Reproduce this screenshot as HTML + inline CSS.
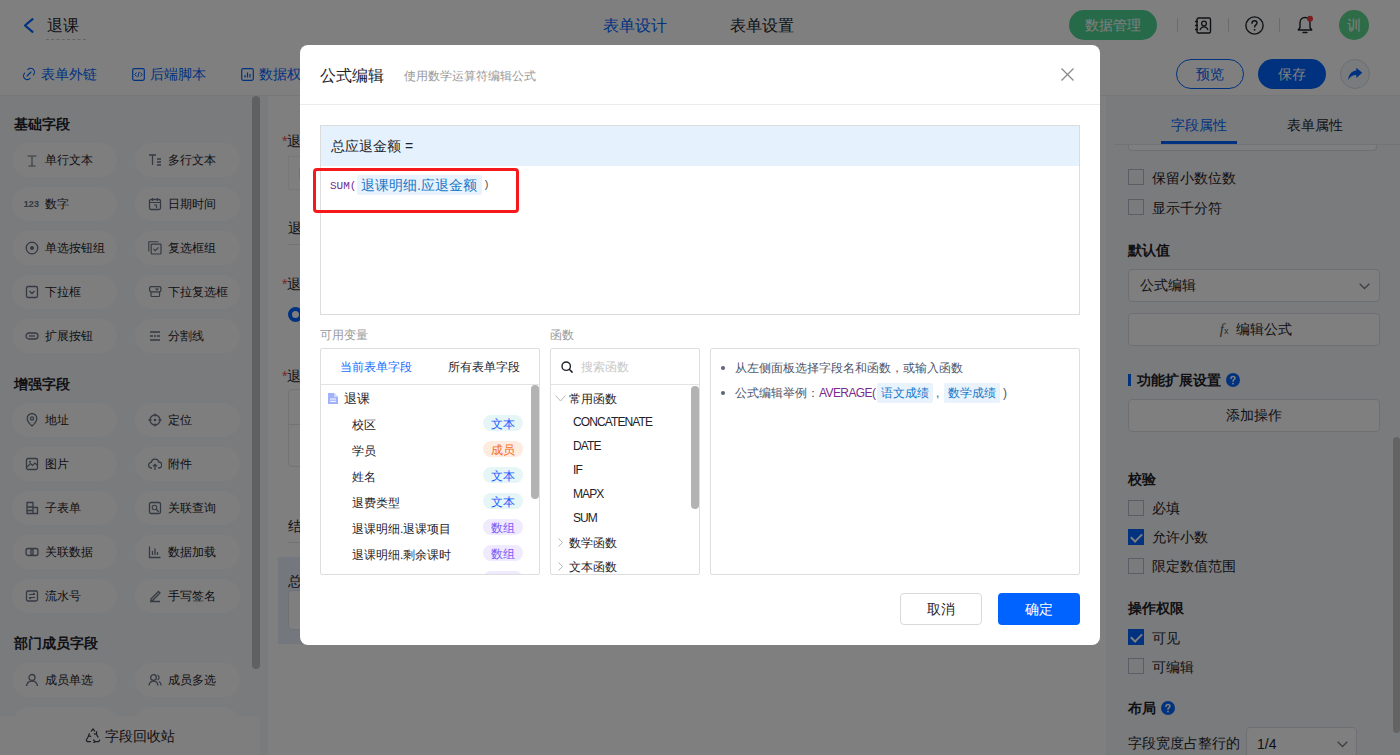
<!DOCTYPE html>
<html><head><meta charset="utf-8">
<style>
*{box-sizing:border-box;margin:0;padding:0}
html,body{width:1400px;height:755px;overflow:hidden;background:#fff}
body{font-family:"Liberation Sans",sans-serif;color:#1f2329;position:relative}
.a{position:absolute;white-space:nowrap}
/* header */
#hdr{position:absolute;left:0;top:0;width:1400px;height:51px;background:#fff;border-bottom:1px solid #e8e8e8}
#tb{position:absolute;left:0;top:50px;width:1400px;height:46px;background:#fff;border-bottom:1px solid #eceef2}
#lp{position:absolute;left:0;top:96px;width:260px;height:659px;background:#f4f6f9}
.sec{position:absolute;left:14px;font-size:14px;font-weight:bold;color:#1f2329;line-height:14px}
.chip{position:absolute;width:105px;height:34px;border-radius:17px;background:#fdfdfe;font-size:12px;line-height:34px;color:#1f2329}
.chip .ic{position:absolute;left:13px;top:10px;width:14px;height:14px}
.chip span{position:absolute;left:33px;top:0}
#canvas{position:absolute;left:260px;top:96px;width:846px;height:659px;background:#f4f6f9}
#form{position:absolute;left:268px;top:96px;width:838px;height:659px;background:#fff}
#rp{position:absolute;left:1106px;top:96px;width:294px;height:659px;background:#f5f7fa}
.cb{position:absolute;left:1128px;width:16px;height:16px;border:1px solid #b4bbcb;border-radius:0;background:transparent}
.cb.on{background:#0265ff;border-color:#0265ff}
.cb.on::after{content:"";position:absolute;left:4px;top:1px;width:5px;height:9px;border:solid #fff;border-width:0 2px 2px 0;transform:rotate(45deg)}
.rt{position:absolute;left:1152px;font-size:14px;line-height:16px;color:#1f2329}
.rh{position:absolute;left:1128px;font-size:14px;font-weight:bold;line-height:14px;color:#1f2329}
.rbox{position:absolute;left:1128px;width:252px;height:33px;border:1px solid #dcdfe6;border-radius:4px;background:#fff;font-size:14px;line-height:31px}
#mask{position:absolute;left:0;top:0;width:1400px;height:755px;background:rgba(0,0,0,.5)}
/* modal */
#modal{position:absolute;left:300px;top:45px;width:800px;height:600px;background:#fff;border-radius:8px}
.m{position:absolute;white-space:nowrap}
.pnl{position:absolute;top:348px;height:227px;border:1px solid #dedede;border-radius:2px;background:#fff;overflow:hidden}
.vi{position:absolute;left:32px;font-size:12px;line-height:14px;color:#1f2329;margin-top:1px}
.tag{position:absolute;left:163px;width:40px;height:16px;border-radius:8px;font-size:12px;line-height:18px;text-align:center}
.t1{background:#e6f6f6;color:#1f5cff}
.t2{background:#ffece1;color:#f26b22}
.t3{background:#efeafd;color:#7a5af8}
.fn{position:absolute;left:22px;font-size:12px;line-height:14px;color:#1f2329}
.fl{font-size:12px;letter-spacing:-0.9px}
</style></head><body>

<!-- HEADER -->
<div id="hdr"></div>
<svg class="a" style="left:23px;top:18px" width="11" height="15" viewBox="0 0 11 15"><path d="M9.5 1.2 L2 7.5 L9.5 13.8" fill="none" stroke="#0265ff" stroke-width="2.2" stroke-linecap="round" stroke-linejoin="round"/></svg>
<div class="a" style="left:47px;top:15px;font-size:16px;line-height:22px;color:#1f2329">退课</div>
<div class="a" style="left:46px;top:39px;width:40px;border-top:1px dashed #c8c8c8"></div>
<div class="a" style="left:603px;top:15px;font-size:16px;line-height:22px;color:#0265ff">表单设计</div>
<div class="a" style="left:730px;top:15px;font-size:16px;line-height:22px;color:#1f2329">表单设置</div>
<div class="a" style="left:1069px;top:10px;width:88px;height:30px;border-radius:15px;background:#4ed494;color:#fff;font-size:14px;line-height:30px;text-align:center">数据管理</div>
<div class="a" style="left:1177px;top:18px;width:1px;height:14px;background:#d8d8d8"></div>
<div class="a" style="left:1228px;top:18px;width:1px;height:14px;background:#d8d8d8"></div>
<div class="a" style="left:1279px;top:18px;width:1px;height:14px;background:#d8d8d8"></div>
<svg class="a" style="left:1194px;top:17px" width="18" height="17" viewBox="0 0 18 17"><rect x="3" y="1" width="13.5" height="15" rx="1.5" fill="none" stroke="#1f2329" stroke-width="1.4"/><circle cx="10" cy="6.5" r="2.4" fill="none" stroke="#1f2329" stroke-width="1.3"/><path d="M6 13.2c.6-2.3 2-3.3 4-3.3s3.4 1 4 3.3" fill="none" stroke="#1f2329" stroke-width="1.3"/><path d="M1 4.5h3M1 8.5h3M1 12.5h3" stroke="#1f2329" stroke-width="1.3"/></svg>
<svg class="a" style="left:1245px;top:16px" width="19" height="19" viewBox="0 0 19 19"><circle cx="9.5" cy="9.5" r="8.6" fill="none" stroke="#1f2329" stroke-width="1.4"/><path d="M7 7.3c0-1.5 1.1-2.5 2.5-2.5s2.5 1 2.5 2.3c0 1.7-2.4 1.9-2.4 3.8" fill="none" stroke="#1f2329" stroke-width="1.4" stroke-linecap="round"/><circle cx="9.6" cy="13.8" r=".9" fill="#1f2329"/></svg>
<svg class="a" style="left:1296px;top:15px" width="18" height="20" viewBox="0 0 18 20"><path d="M9 2.5c-3 0-5 2.3-5 5.3v4.7L2.3 15h13.4L14 12.5V7.8c0-3-2-5.3-5-5.3z" fill="none" stroke="#1f2329" stroke-width="1.4" stroke-linejoin="round"/><path d="M7 17.5h4" stroke="#1f2329" stroke-width="1.4" stroke-linecap="round"/><circle cx="14" cy="3.8" r="3" fill="#f23c3c"/></svg>
<div class="a" style="left:1339px;top:10px;width:30px;height:30px;border-radius:15px;background:#5cd890;color:#fff;font-size:14px;line-height:30px;text-align:center">训</div>

<!-- TOOLBAR -->
<div id="tb"></div>
<svg class="a" style="left:22px;top:67px" width="14" height="14" viewBox="0 0 14 14"><path d="M5.9 2.6A3.7 3.7 0 0 1 11.4 7.8M8.1 11.4A3.7 3.7 0 0 1 2.6 6.2M5 9l4-4" fill="none" stroke="#0265ff" stroke-width="1.15" stroke-linecap="round"/></svg>
<div class="a" style="left:41px;top:64px;font-size:14px;line-height:20px;color:#0265ff">表单外链</div>
<svg class="a" style="left:132px;top:68px" width="13" height="13" viewBox="0 0 13 13"><rect x=".7" y=".7" width="11.6" height="11.6" rx="1.5" fill="none" stroke="#0265ff" stroke-width="1.2"/><path d="M4.5 4.5 2.8 6.5l1.7 2M8.5 4.5l1.7 2-1.7 2M7.2 3.8 5.8 9.2" fill="none" stroke="#0265ff" stroke-width="1"/></svg>
<div class="a" style="left:150px;top:64px;font-size:14px;line-height:20px;color:#0265ff">后端脚本</div>
<svg class="a" style="left:241px;top:68px" width="13" height="13" viewBox="0 0 13 13"><rect x=".7" y=".7" width="11.6" height="11.6" rx="1.5" fill="none" stroke="#0265ff" stroke-width="1.2"/><path d="M4 9.5V7M6.5 9.5V4.5M9 9.5V6" stroke="#0265ff" stroke-width="1.2"/></svg>
<div class="a" style="left:259px;top:64px;font-size:14px;line-height:20px;color:#0265ff">数据权限</div>
<div class="a" style="left:1176px;top:59px;width:68px;height:30px;border:1px solid #0265ff;border-radius:15px;color:#0265ff;font-size:14px;line-height:28px;text-align:center">预览</div>
<div class="a" style="left:1258px;top:59px;width:68px;height:30px;border-radius:15px;background:#0265ff;color:#fff;font-size:14px;line-height:30px;text-align:center">保存</div>
<div class="a" style="left:1340px;top:59px;width:30px;height:30px;border:1px solid #d5dcea;border-radius:15px;background:#f4f6fb"></div>
<svg class="a" style="left:1347px;top:67px" width="16" height="14" viewBox="0 0 16 14"><path d="M9.3.7 15.3 5.8 9.3 11V8.1C5.6 8.1 3.2 9.6 1.2 12.9 1.6 7.6 4.4 3.9 9.3 3.4z" fill="#0265ff"/></svg>

<!-- LEFT PANEL -->
<div id="lp"></div>
<div class="sec" style="top:117px">基础字段</div>
<div class="chip" style="left:12px;top:143px"><svg class="ic" width="14" height="14" viewBox="0 0 14 14"><path d="M2.5 3h9M3.5 13h7M7 3v10" stroke="#6a7284" stroke-width="1.1"/></svg><span>单行文本</span></div>
<div class="chip" style="left:135px;top:143px"><svg class="ic" width="14" height="14" viewBox="0 0 14 14"><path d="M1 2h7M4.5 2v10M9 6h4M9 9h4M9 12h4" stroke="#6a7284" stroke-width="1.3"/></svg><span>多行文本</span></div>
<div class="chip" style="left:12px;top:187px"><svg class="ic" width="14" height="14" viewBox="0 0 14 14" style="overflow:visible"><text x="-1.5" y="10" font-size="9.5" font-weight="bold" fill="#6a7284" font-family="Liberation Sans" letter-spacing="-0.2">123</text></svg><span>数字</span></div>
<div class="chip" style="left:135px;top:187px"><svg class="ic" width="14" height="14" viewBox="0 0 14 14"><rect x="1.5" y="2.5" width="11" height="10" rx="1.5" fill="none" stroke="#6a7284" stroke-width="1.3"/><path d="M1.5 5.5h11M4.5 1v3M9.5 1v3M6 8h2.5v3" fill="none" stroke="#6a7284" stroke-width="1.1"/></svg><span>日期时间</span></div>
<div class="chip" style="left:12px;top:231px"><svg class="ic" width="14" height="14" viewBox="0 0 14 14"><circle cx="7" cy="7" r="5.8" fill="none" stroke="#6a7284" stroke-width="1.3"/><circle cx="7" cy="7" r="2" fill="#6a7284"/></svg><span>单选按钮组</span></div>
<div class="chip" style="left:135px;top:231px"><svg class="ic" width="14" height="14" viewBox="0 0 14 14"><path d="M.8 10.5V.8h9.7" fill="none" stroke="#6a7284" stroke-width="1.1"/><rect x="3.2" y="3.2" width="9.8" height="9.8" rx=".8" fill="none" stroke="#6a7284" stroke-width="1.2"/><path d="M5.5 7.8l1.8 1.8 3.3-3.3" fill="none" stroke="#6a7284" stroke-width="1.1"/></svg><span>复选框组</span></div>
<div class="chip" style="left:12px;top:275px"><svg class="ic" width="14" height="14" viewBox="0 0 14 14"><rect x="1.5" y="1.5" width="11" height="11" rx="1.5" fill="none" stroke="#6a7284" stroke-width="1.3"/><path d="M4.5 6l2.5 2.5 2.5-2.5" fill="none" stroke="#6a7284" stroke-width="1.3"/></svg><span>下拉框</span></div>
<div class="chip" style="left:135px;top:275px"><svg class="ic" width="14" height="14" viewBox="0 0 14 14"><rect x="1.6" y="1.6" width="11.3" height="5.2" rx="1.5" fill="none" stroke="#6a7284" stroke-width="1.3"/><path d="M3 6.8v3.7a1 1 0 0 0 1 1h6.6a1 1 0 0 0 1-1V6.8M7.6 3.4l1.4 1.5 1.4-1.5" fill="none" stroke="#6a7284" stroke-width="1.2"/></svg><span>下拉复选框</span></div>
<div class="chip" style="left:12px;top:319px"><svg class="ic" width="14" height="14" viewBox="0 0 14 14"><rect x="1" y="4" width="12" height="6" rx="3" fill="none" stroke="#6a7284" stroke-width="1.3"/><path d="M4 7h6" stroke="#6a7284" stroke-width="1.3"/></svg><span>扩展按钮</span></div>
<div class="chip" style="left:135px;top:319px"><svg class="ic" width="14" height="14" viewBox="0 0 14 14"><path d="M2 3h10M2 11h10M2 7h3M6 7h2M9 7h3" stroke="#6a7284" stroke-width="1.3"/></svg><span>分割线</span></div>
<div class="sec" style="top:377px">增强字段</div>
<div class="chip" style="left:12px;top:403px"><svg class="ic" width="14" height="14" viewBox="0 0 14 14"><path d="M7 13s-4.8-4.3-4.8-7.6a4.8 4.8 0 0 1 9.6 0C11.8 8.7 7 13 7 13z" fill="none" stroke="#6a7284" stroke-width="1.3"/><circle cx="7" cy="5.5" r="1.6" fill="none" stroke="#6a7284" stroke-width="1.3"/></svg><span>地址</span></div>
<div class="chip" style="left:135px;top:403px"><svg class="ic" width="14" height="14" viewBox="0 0 14 14"><circle cx="7" cy="7" r="5" fill="none" stroke="#6a7284" stroke-width="1.3"/><circle cx="7" cy="7" r="1.3" fill="#6a7284"/><path d="M7 .5v3M7 10.5v3M.5 7h3M10.5 7h3" stroke="#6a7284" stroke-width="1.3"/></svg><span>定位</span></div>
<div class="chip" style="left:12px;top:447px"><svg class="ic" width="14" height="14" viewBox="0 0 14 14"><rect x="1.5" y="1.5" width="11" height="11" rx="1.5" fill="none" stroke="#6a7284" stroke-width="1.3"/><path d="M2 10l3.5-3.5 2 2L10 6l2.5 2.5" fill="none" stroke="#6a7284" stroke-width="1.1"/><circle cx="5" cy="4.8" r="1" fill="#6a7284"/></svg><span>图片</span></div>
<div class="chip" style="left:135px;top:447px"><svg class="ic" width="14" height="14" viewBox="0 0 14 14"><path d="M4 11H3.5a2.8 2.8 0 0 1-.3-5.6A3.9 3.9 0 0 1 10.8 5a3 3 0 0 1 0 6H10" fill="none" stroke="#6a7284" stroke-width="1.3"/><path d="M7 13V7.5M5 9.3 7 7.3l2 2" fill="none" stroke="#6a7284" stroke-width="1.3"/></svg><span>附件</span></div>
<div class="chip" style="left:12px;top:491px"><svg class="ic" width="14" height="14" viewBox="0 0 14 14"><path d="M2 1.5h6v11H2zM8 6.5h4.5v6H8M2 6h6M2 9.5h6" fill="none" stroke="#6a7284" stroke-width="1.3"/></svg><span>子表单</span></div>
<div class="chip" style="left:135px;top:491px"><svg class="ic" width="14" height="14" viewBox="0 0 14 14"><rect x="1.5" y="1.5" width="11" height="11" rx="1.5" fill="none" stroke="#6a7284" stroke-width="1.3"/><circle cx="6.5" cy="6.5" r="2.3" fill="none" stroke="#6a7284" stroke-width="1.1"/><path d="M8.2 8.2l2.5 2.5" stroke="#6a7284" stroke-width="1.3"/></svg><span>关联查询</span></div>
<div class="chip" style="left:12px;top:535px"><svg class="ic" width="14" height="14" viewBox="0 0 14 14"><rect x="1" y="3.5" width="7" height="7" rx="2" fill="none" stroke="#6a7284" stroke-width="1.3"/><rect x="6" y="3.5" width="7" height="7" rx="2" fill="none" stroke="#6a7284" stroke-width="1.3"/></svg><span>关联数据</span></div>
<div class="chip" style="left:135px;top:535px"><svg class="ic" width="14" height="14" viewBox="0 0 14 14"><path d="M1.5 1.5v11h11M4.5 10V6M7 10V3.5M9.5 10V7" fill="none" stroke="#6a7284" stroke-width="1.3"/></svg><span>数据加载</span></div>
<div class="chip" style="left:12px;top:579px"><svg class="ic" width="14" height="14" viewBox="0 0 14 14"><rect x="1.5" y="2" width="11" height="10" rx="1.5" fill="none" stroke="#6a7284" stroke-width="1.3"/><path d="M4 5.5h6M4 8.5h6M8 4l2 1.5M6 10 4 8.5" fill="none" stroke="#6a7284" stroke-width="1.1"/></svg><span>流水号</span></div>
<div class="chip" style="left:135px;top:579px"><svg class="ic" width="14" height="14" viewBox="0 0 14 14"><path d="M2 12.5h10M3 10l7.5-7.5 1.5 1.5L4.5 11.5H3z" fill="none" stroke="#6a7284" stroke-width="1.3"/></svg><span>手写签名</span></div>
<div class="sec" style="top:636px">部门成员字段</div>
<div class="chip" style="left:12px;top:663px"><svg class="ic" width="14" height="14" viewBox="0 0 14 14"><circle cx="7" cy="4.5" r="3" fill="none" stroke="#6a7284" stroke-width="1.3"/><path d="M1.5 13c.5-3 2.5-4.8 5.5-4.8s5 1.8 5.5 4.8" fill="none" stroke="#6a7284" stroke-width="1.3"/></svg><span>成员单选</span></div>
<div class="chip" style="left:135px;top:663px"><svg class="ic" width="14" height="14" viewBox="0 0 14 14"><circle cx="5.5" cy="4.5" r="2.8" fill="none" stroke="#6a7284" stroke-width="1.3"/><path d="M1 12.5c.4-2.8 2-4.3 4.5-4.3s4.1 1.5 4.5 4.3M9.5 2a2.8 2.8 0 0 1 0 5M11 8.5c1.3.6 2 2 2.2 4" fill="none" stroke="#6a7284" stroke-width="1.3"/></svg><span>成员多选</span></div>
<div class="chip" style="left:12px;top:707px"><svg class="ic" width="14" height="14" viewBox="0 0 14 14"><circle cx="7" cy="4.5" r="3" fill="none" stroke="#6a7284" stroke-width="1.3"/><path d="M1.5 13c.5-3 2.5-4.8 5.5-4.8s5 1.8 5.5 4.8" fill="none" stroke="#6a7284" stroke-width="1.3"/></svg><span>部门单选</span></div>
<div class="chip" style="left:135px;top:707px"><svg class="ic" width="14" height="14" viewBox="0 0 14 14"><circle cx="5.5" cy="4.5" r="2.8" fill="none" stroke="#6a7284" stroke-width="1.3"/><path d="M1 12.5c.4-2.8 2-4.3 4.5-4.3s4.1 1.5 4.5 4.3M9.5 2a2.8 2.8 0 0 1 0 5M11 8.5c1.3.6 2 2 2.2 4" fill="none" stroke="#6a7284" stroke-width="1.3"/></svg><span>部门多选</span></div>
<div class="a" style="left:252px;top:96px;width:8px;height:573px;border-radius:4px;background:#c0c0c0"></div>
<div class="a" style="left:0;top:716px;width:260px;height:39px;background:#fcfcfd"></div>
<svg class="a" style="left:85px;top:728px" width="16" height="15" viewBox="0 0 16 15"><path d="M6.3 3.2 8 .9l1.7 2.3M11.4 6.2l1.7 2.9M10.3 13.6H13.8l.9-1.6M5.5 13.6H2.2l-.9-1.6 2.3-4" fill="none" stroke="#3a3f48" stroke-width="1.2" stroke-linejoin="round" stroke-linecap="round"/><path d="M4.3 5.6 3.6 7.8l2.1.5M11.7 3.7l-.2 2.5-2.2-.3M8.6 12l1.7 1.6-1.7 1.2" fill="none" stroke="#3a3f48" stroke-width="1.2" stroke-linejoin="round" stroke-linecap="round"/></svg>
<div class="a" style="left:105px;top:726px;font-size:14px;line-height:20px;color:#1f2329">字段回收站</div>

<!-- CANVAS -->
<div id="canvas"></div>
<div id="form"></div>
<div class="a" style="left:282px;top:133px;font-size:14px;line-height:16px;color:#1f2329"><span style="color:#f54a45">*</span>退课日期</div>
<div class="a" style="left:288px;top:156px;width:10px;height:34px;border:1px solid #eff0f2;border-right:none"></div>
<div class="a" style="left:298px;top:156px;width:800px;height:1px;background:#f2f3f5"></div>
<div class="a" style="left:298px;top:189px;width:800px;height:1px;background:#f2f3f5"></div>
<div class="a" style="left:299px;top:168px;width:2px;height:11px;background:#fbe0c8"></div>
<div class="a" style="left:288px;top:220px;font-size:14px;line-height:16px;color:#1f2329">退课明细</div>
<div class="a" style="left:288px;top:244px;width:810px;height:1px;background:#e5e6eb"></div>
<div class="a" style="left:282px;top:276px;font-size:14px;line-height:16px;color:#1f2329"><span style="color:#f54a45">*</span>退费方式</div>
<div class="a" style="left:288px;top:307px;width:15px;height:15px;border-radius:8px;border:4px solid #0265ff;background:#fff"></div>
<div class="a" style="left:282px;top:368px;font-size:14px;line-height:16px;color:#1f2329"><span style="color:#f54a45">*</span>退课原因</div>
<div class="a" style="left:288px;top:389px;width:810px;height:78px;border:1px solid #e5e6eb;border-radius:4px"></div>
<div class="a" style="left:288px;top:424px;width:810px;height:1px;background:#e5e6eb"></div>
<div class="a" style="left:288px;top:518px;font-size:14px;line-height:16px;color:#1f2329">结算信息</div>
<div class="a" style="left:288px;top:542px;width:810px;height:1px;background:#e5e6eb"></div>
<div class="a" style="left:278px;top:557px;width:820px;height:87px;background:#e8eefc"></div>
<div class="a" style="left:288px;top:573px;font-size:14px;line-height:16px;color:#1f2329">总应退金额</div>
<div class="a" style="left:288px;top:590px;width:800px;height:40px;border:1px solid #dfe2e8;border-radius:4px;background:#fff"></div>


<!-- RIGHT PANEL -->
<div id="rp"></div>
<div class="a" style="left:1114px;top:144px;width:286px;height:1px;background:#e5e6eb"></div>
<div class="a" style="left:1171px;top:115px;font-size:14px;line-height:20px;color:#0265ff">字段属性</div>
<div class="a" style="left:1161px;top:141px;width:76px;height:3px;background:#0265ff"></div>
<div class="a" style="left:1287px;top:115px;font-size:14px;line-height:20px;color:#1f2329">表单属性</div>
<div class="a" style="left:1128px;top:120px;width:249px;height:31px;border:1px solid #dcdfe6;border-top:none;border-radius:0 0 4px 4px;background:#fff"></div>
<div class="a" style="left:1106px;top:96px;width:294px;height:48px;background:#f5f7fa"></div>
<div class="a" style="left:1114px;top:144px;width:286px;height:1px;background:#e5e6eb"></div>
<div class="a" style="left:1171px;top:115px;font-size:14px;line-height:20px;color:#0265ff">字段属性</div>
<div class="a" style="left:1161px;top:141px;width:76px;height:3px;background:#0265ff"></div>
<div class="a" style="left:1287px;top:115px;font-size:14px;line-height:20px;color:#1f2329">表单属性</div>
<div class="cb" style="top:169px"></div><div class="rt" style="top:170px">保留小数位数</div>
<div class="cb" style="top:199px"></div><div class="rt" style="top:200px">显示千分符</div>
<div class="rh" style="top:243px">默认值</div>
<div class="rbox" style="top:269px;padding-left:11px">公式编辑</div>
<svg class="a" style="left:1359px;top:283px" width="11" height="7" viewBox="0 0 11 7"><path d="M.7.7l4.8 4.8L10.3.7" fill="none" stroke="#7a7f88" stroke-width="1.3"/></svg>
<div class="rbox" style="top:313px;text-align:center;padding-left:4px"><span style="font-family:'Liberation Serif',serif;font-style:italic;color:#555;font-size:15px">f</span><span style="font-size:9px;color:#555">x</span>&nbsp; 编辑公式</div>
<div class="a" style="left:1128px;top:374px;width:3px;height:12px;background:#0265ff"></div>
<div class="rh" style="left:1137px;top:373px">功能扩展设置</div>
<svg class="a" style="left:1226px;top:373px" width="14" height="14" viewBox="0 0 14 14"><circle cx="7" cy="7" r="7" fill="#0265ff"/><path d="M5 5.4c0-1.2.9-2 2-2s2 .8 2 1.8c0 1.4-2 1.5-2 3" fill="none" stroke="#fff" stroke-width="1.5" stroke-linecap="round"/><circle cx="7" cy="10.6" r=".9" fill="#fff"/></svg>
<div class="rbox" style="top:399px;text-align:center">添加操作</div>
<div class="rh" style="top:472px">校验</div>
<div class="cb" style="top:500px"></div><div class="rt" style="top:500px">必填</div>
<div class="cb on" style="top:529px"></div><div class="rt" style="top:529px">允许小数</div>
<div class="cb" style="top:558px"></div><div class="rt" style="top:558px">限定数值范围</div>
<div class="rh" style="top:601px">操作权限</div>
<div class="cb on" style="top:629px"></div><div class="rt" style="top:630px">可见</div>
<div class="cb" style="top:658px"></div><div class="rt" style="top:659px">可编辑</div>
<div class="rh" style="top:701px">布局</div>
<svg class="a" style="left:1161px;top:701px" width="14" height="14" viewBox="0 0 14 14"><circle cx="7" cy="7" r="7" fill="#0265ff"/><path d="M5 5.4c0-1.2.9-2 2-2s2 .8 2 1.8c0 1.4-2 1.5-2 3" fill="none" stroke="#fff" stroke-width="1.5" stroke-linecap="round"/><circle cx="7" cy="10.6" r=".9" fill="#fff"/></svg>
<div class="a" style="left:1128px;top:735px;font-size:14px;line-height:16px;color:#1f2329">字段宽度占整行的</div>
<div class="a" style="left:1246px;top:727px;width:111px;height:33px;border:1px solid #dcdfe6;border-radius:4px;background:#fff;font-size:14px;line-height:33px;padding-left:10px">1/4</div>
<svg class="a" style="left:1337px;top:741px" width="11" height="7" viewBox="0 0 11 7"><path d="M.7.7l4.8 4.8L10.3.7" fill="none" stroke="#7a7f88" stroke-width="1.3"/></svg>
<div class="a" style="left:1393px;top:437px;width:7px;height:296px;border-radius:4px;background:#c8c8c8"></div>


<div id="mask"></div>

<!-- MODAL -->
<div id="modal"></div>
<div class="m" style="left:320px;top:65px;font-size:16px;line-height:22px;color:#1f2329">公式编辑</div>
<div class="m" style="left:404px;top:68px;font-size:12px;line-height:16px;color:#999">使用数学运算符编辑公式</div>
<svg class="m" style="left:1061px;top:68px" width="13" height="13" viewBox="0 0 13 13"><path d="M.5.5l12 12M12.5.5l-12 12" stroke="#8a8a8a" stroke-width="1.3"/></svg>
<div class="m" style="left:300px;top:104px;width:800px;height:1px;background:#ebebeb"></div>
<div class="m" style="left:320px;top:125px;width:760px;height:190px;border:1px solid #dcdcdc;background:#fff"></div>
<div class="m" style="left:321px;top:126px;width:758px;height:40px;background:#e5f2fd"></div>
<div class="m" style="left:331px;top:136px;font-size:14px;line-height:20px;color:#1f2329">总应退金额 =</div>
<div class="m" style="left:330px;top:179px;font-family:'Liberation Mono',monospace;font-size:11px;line-height:14px;color:#6f2e96">SUM(</div>
<div class="m" style="left:357px;top:175px;width:125px;height:20px;background:#e8f3fe;border-radius:2px"></div>
<div class="m" style="left:361px;top:175px;font-size:14px;line-height:20px;color:#1677c6">退课明细.应退金额</div>
<div class="m" style="left:483px;top:177px;font-family:'Liberation Mono',monospace;font-size:11px;line-height:16px;color:#555">)</div>
<div class="m" style="left:313px;top:168px;width:206px;height:45px;border:3px solid #f5191c;border-radius:4px"></div>

<div class="m" style="left:320px;top:327px;font-size:12px;line-height:16px;color:#999">可用变量</div>
<div class="m" style="left:550px;top:327px;font-size:12px;line-height:16px;color:#999">函数</div>

<div class="pnl" style="left:320px;width:220px"></div>
<div class="m" style="left:321px;top:384px;width:218px;height:1px;background:#e3e3e3"></div>
<div class="m" style="left:340px;top:359px;font-size:12px;line-height:16px;color:#1a6cff">当前表单字段</div>
<div class="m" style="left:448px;top:359px;font-size:12px;line-height:16px;color:#1f2329">所有表单字段</div>
<svg class="m" style="left:328px;top:393px" width="10" height="11" viewBox="0 0 10 11"><path d="M0 0h6l4 4v7H0z" fill="#9fb2fa"/><path d="M2 6h6M2 8.3h6" stroke="#fff" stroke-width="1"/><path d="M6 0v4h4" fill="#cfd9fd"/></svg>
<div class="m" style="left:344px;top:391px;font-size:13px;line-height:15px;color:#1f2329">退课</div>
<div id="vlist" class="m" style="left:320px;top:385px;width:220px;height:189px;overflow:hidden">
 <div class="vi" style="top:32px">校区</div><div class="tag t1" style="top:30px">文本</div>
 <div class="vi" style="top:58px">学员</div><div class="tag t2" style="top:56px">成员</div>
 <div class="vi" style="top:84px">姓名</div><div class="tag t1" style="top:82px">文本</div>
 <div class="vi" style="top:110px">退费类型</div><div class="tag t1" style="top:108px">文本</div>
 <div class="vi" style="top:136px">退课明细.退课项目</div><div class="tag t3" style="top:134px">数组</div>
 <div class="vi" style="top:162px">退课明细.剩余课时</div><div class="tag t3" style="top:160px">数组</div>
 <div class="tag t3" style="top:186px">数组</div>
</div>
<div class="m" style="left:531px;top:385px;width:8px;height:114px;border-radius:4px;background:#b3b3b3"></div>

<div class="pnl" style="left:550px;width:150px"></div>
<div class="m" style="left:551px;top:384px;width:148px;height:1px;background:#e3e3e3"></div>
<svg class="m" style="left:561px;top:361px" width="12" height="12" viewBox="0 0 12 12"><circle cx="5.2" cy="5.2" r="4.2" fill="none" stroke="#1f2329" stroke-width="1.4"/><path d="M8.3 8.3l2.8 2.8" stroke="#1f2329" stroke-width="1.5" stroke-linecap="round"/></svg>
<div class="m" style="left:581px;top:359px;font-size:12px;line-height:16px;color:#c8c8c8">搜索函数</div>
<div class="m" style="left:550px;top:385px;width:150px;height:189px;overflow:hidden">
 <svg class="m" style="left:5px;top:10px" width="11" height="7" viewBox="0 0 11 7"><path d="M.5.5l5 5.5 5-5.5" fill="none" stroke="#b8b8b8" stroke-width="1"/></svg>
 <div class="fn" style="left:19px;top:7px">常用函数</div>
 <div class="fn fl" style="left:23px;top:30px">CONCATENATE</div>
 <div class="fn fl" style="left:23px;top:54px">DATE</div>
 <div class="fn fl" style="left:23px;top:78px">IF</div>
 <div class="fn fl" style="left:23px;top:102px">MAPX</div>
 <div class="fn fl" style="left:23px;top:126px">SUM</div>
 <svg class="m" style="left:8px;top:153px" width="5" height="9" viewBox="0 0 5 9"><path d="M.5.5l4 4-4 4" fill="none" stroke="#b8b8b8" stroke-width="1"/></svg>
 <div class="fn" style="left:19px;top:151px">数学函数</div>
 <svg class="m" style="left:8px;top:177px" width="5" height="9" viewBox="0 0 5 9"><path d="M.5.5l4 4-4 4" fill="none" stroke="#b8b8b8" stroke-width="1"/></svg>
 <div class="fn" style="left:19px;top:175px">文本函数</div>
</div>
<div class="m" style="left:691px;top:386px;width:8px;height:123px;border-radius:4px;background:#b3b3b3"></div>

<div class="pnl" style="left:710px;width:370px"></div>
<div class="m" style="left:721px;top:366px;width:4px;height:4px;border-radius:2px;background:#5b6478"></div>
<div class="m" style="left:735px;top:360px;font-size:12px;line-height:16px;color:#4d566b">从左侧面板选择字段名和函数，或输入函数</div>
<div class="m" style="left:721px;top:391px;width:4px;height:4px;border-radius:2px;background:#5b6478"></div>
<div class="m" style="left:735px;top:385px;font-size:12px;line-height:16px;color:#4d566b">公式编辑举例：<span style="color:#7b2a8e;letter-spacing:-0.6px">AVERAGE(</span></div>
<div class="m" style="left:877px;top:383px;width:56px;height:20px;border-radius:2px;background:#e8f3fe"></div>
<div class="m" style="left:881px;top:385px;font-size:12px;line-height:16px;color:#1677c6">语文成绩</div>
<div class="m" style="left:936px;top:385px;font-size:12px;line-height:16px;color:#555">,</div>
<div class="m" style="left:944px;top:383px;width:56px;height:20px;border-radius:2px;background:#e8f3fe"></div>
<div class="m" style="left:948px;top:385px;font-size:12px;line-height:16px;color:#1677c6">数学成绩</div>
<div class="m" style="left:1003px;top:385px;font-size:12px;line-height:16px;color:#555">)</div>

<div class="m" style="left:900px;top:593px;width:82px;height:32px;border:1px solid #d9d9d9;border-radius:4px;font-size:14px;line-height:30px;text-align:center;color:#1f2329">取消</div>
<div class="m" style="left:998px;top:593px;width:82px;height:32px;border-radius:4px;background:#0062ff;font-size:14px;line-height:32px;text-align:center;color:#fff;font-weight:500">确定</div>


</body></html>
